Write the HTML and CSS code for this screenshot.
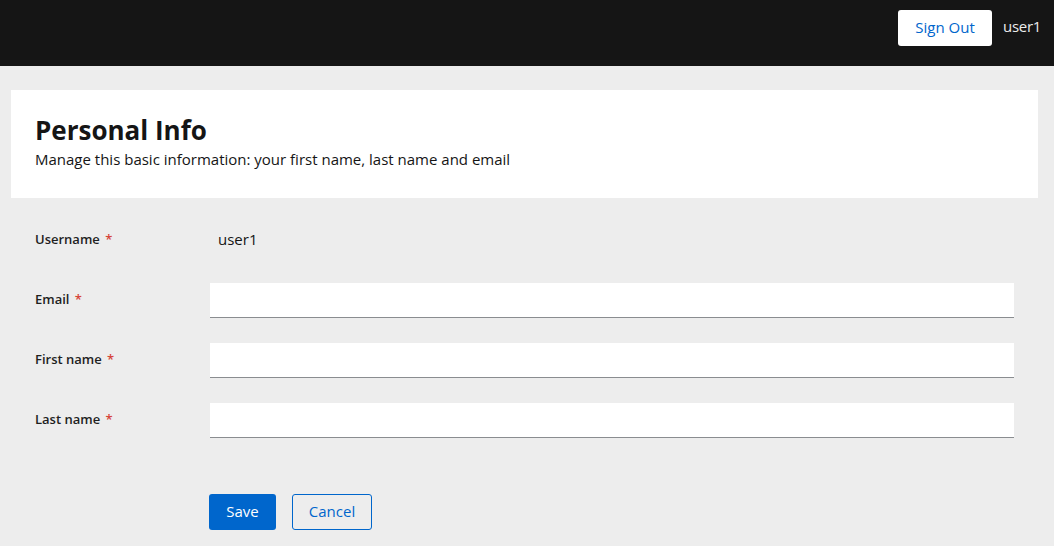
FILE: index.html
```html
<!DOCTYPE html>
<html>
<head>
<meta charset="utf-8">
<link rel="stylesheet" href="styles.css">
</head>
<body>
<header class="masthead">
  <button class="btn-signout">Sign Out</button>
  <span class="masthead-user">user1</span>
</header>
<main class="page">
  <section class="card">
    <h1 class="title">Personal Info</h1>
    <p class="subtitle">Manage this basic information: your first name, last name and email</p>
  </section>
  <form class="form">
    <div class="row">
      <label class="label">Username <span class="req">*</span></label>
      <div class="value">user1</div>
    </div>
    <div class="row">
      <label class="label">Email <span class="req">*</span></label>
      <input class="input" type="text">
    </div>
    <div class="row">
      <label class="label">First name <span class="req">*</span></label>
      <input class="input" type="text">
    </div>
    <div class="row">
      <label class="label">Last name <span class="req">*</span></label>
      <input class="input" type="text">
    </div>
    <div class="actions">
      <button type="button" class="btn btn-primary">Save</button>
      <button type="button" class="btn btn-secondary">Cancel</button>
    </div>
  </form>
</main>
</body>
</html>
```

FILE: styles.css
```css
* { box-sizing: border-box; }
html, body { margin: 0; padding: 0; }
body {
  background: #ededed;
  font-family: "Open Sans", "Noto Sans", sans-serif;
  color: #151515;
  width: 1054px;
  height: 546px;
  overflow: hidden;
}
.masthead {
  height: 66px;
  background: #151515;
  display: flex;
  align-items: flex-start;
  justify-content: flex-end;
  padding: 10px 13px 0 0;
  gap: 11px;
}
.btn-signout {
  width: 94px;
  height: 36px;
  background: #fff;
  color: #0066cc;
  border: none;
  border-radius: 3px;
  font-family: inherit;
  font-size: 15px;
  padding: 0 0 3px;
}
.masthead-user {
  color: #ececec;
  font-size: 15px;
  letter-spacing: -0.3px;
  line-height: 32px;
}
.page {
  padding: 24px 16px 0 11px;
}
.card {
  background: #fff;
  height: 108px;
  padding: 24px 24px 0 24px;
}
.title {
  margin: 0;
  font-size: 26px;
  font-weight: 700;
  line-height: 32px;
}
.subtitle {
  margin: 1px 0 0;
  font-size: 15px;
  line-height: 24px;
}
.form {
  padding: 25px 24px 0 24px;
}
.row {
  display: flex;
  align-items: center;
  height: 35px;
  margin-bottom: 25px;
}
.label {
  width: 175px;
  flex: none;
  font-size: 13px;
  font-weight: 600;
  color: #1f1f1f;
  margin-top: -3px;
}
.req { color: #d6453a; margin-left: 2px; }
.value {
  padding-left: 8px;
  font-size: 15px;
  margin-top: -4px;
}
.input {
  flex: 1;
  height: 35px;
  border: none;
  border-bottom: 1px solid #8a8d90;
  background: #fff;
  font-family: inherit;
  font-size: 16px;
  padding: 0 8px;
}
.actions {
  display: flex;
  gap: 16px;
  padding-left: 174px;
  margin-top: 56px;
}
.btn {
  height: 36px;
  font-family: inherit;
  font-size: 15px;
  border-radius: 3px;
  padding: 0 8px 3px;
}
.btn-primary {
  width: 67px;
  background: #0066cc;
  color: #fff;
  border: none;
}
.btn-secondary {
  width: 80px;
  background: transparent;
  color: #0066cc;
  border: 1px solid #0066cc;
}
```
